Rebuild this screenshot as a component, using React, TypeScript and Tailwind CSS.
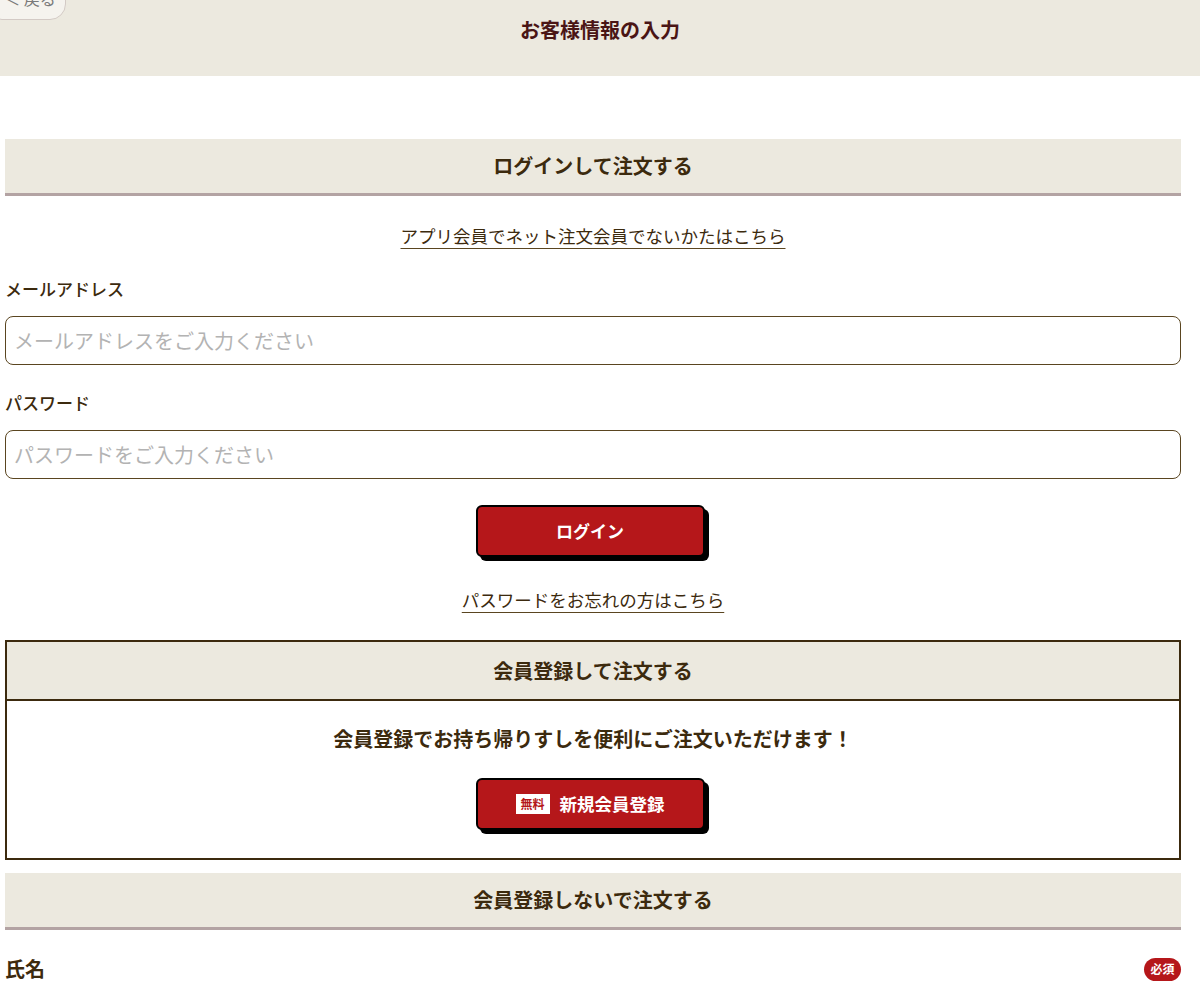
import React from 'react'

const font = { fontFamily: '"Noto Sans CJK JP", "Noto Sans", sans-serif' }

const SectionHead = ({ children }: { children: React.ReactNode }) => (
  <div className="h-[57px] bg-[#ece9df] border-b-[3px] border-[#b3a3a3] flex items-center justify-center">
    <h2 className="text-[20px] font-bold text-[#3c2a0e]">{children}</h2>
  </div>
)

const RedButton = ({ children }: { children: React.ReactNode }) => (
  <button className="w-[229px] h-[52px] rounded-[6px] border-2 border-black bg-[#b5171a] text-white text-[17px] font-bold shadow-[4px_4px_0_#000] flex items-center justify-center gap-[10px]">
    {children}
  </button>
)

const Field = ({ label, placeholder }: { label: string; placeholder: string }) => (
  <div className="flex flex-col">
    <label className="text-[17px] font-medium text-[#3c2a0e] leading-[24px] mb-[15px]">{label}</label>
    <input
      placeholder={placeholder}
      className="h-[49px] w-full rounded-[8px] border-[1.5px] border-[#5a4520] px-[8px] text-[20px] placeholder:text-[#b3b3b3] outline-none"
    />
  </div>
)

export default function App() {
  return (
    <div style={font} className="relative w-[1200px] min-h-[992px] bg-white text-[#3c2a0e] overflow-hidden">
      {/* header */}
      <header className="h-[76px] bg-[#ece9df] flex justify-center pt-[16px]">
        <h1 className="text-[20px] leading-[28px] font-bold text-[#4a1515]">お客様情報の入力</h1>
      </header>
      <button className="absolute -left-[14px] -top-[22px] h-[42px] w-[80px] rounded-[16px] border border-[#d3cac5] bg-[#f5f3ee] text-[#7a7a7a] text-[16px] leading-[20px] flex items-end justify-center pb-[11px] pl-[8px]">
        ＜ 戻る
      </button>

      <main className="ml-[5px] w-[1176px] pt-[63px]">
        <SectionHead>ログインして注文する</SectionHead>

        <p className="text-center mt-[27px] text-[17.5px] leading-[26px] underline underline-offset-[5px] decoration-[#5a4520]">
          アプリ会員でネット注文会員でないかたはこちら
        </p>

        <div className="mt-[28px] flex flex-col gap-[26px]">
          <Field label="メールアドレス" placeholder="メールアドレスをご入力ください" />
          <Field label="パスワード" placeholder="パスワードをご入力ください" />
        </div>

        <div className="flex justify-center mt-[26px] mr-[6px]">
          <RedButton>ログイン</RedButton>
        </div>

        <p className="text-center mt-[30px] text-[17.5px] leading-[26px] underline underline-offset-[5px] decoration-[#5a4520]">
          パスワードをお忘れの方はこちら
        </p>

        {/* register box */}
        <div className="mt-[27px] border-2 border-[#3c2a0e]">
          <div className="h-[59px] bg-[#ece9df] border-b-2 border-[#3c2a0e] flex items-center justify-center">
            <h2 className="text-[20px] font-bold">会員登録して注文する</h2>
          </div>
          <div className="flex flex-col items-center pt-[24px] pb-[28px]">
            <p className="text-[20px] leading-[28px] font-bold">会員登録でお持ち帰りすしを便利にご注文いただけます！</p>
            <div className="mt-[25px] mr-[6px]">
              <RedButton>
                <span className="bg-white text-[#b5171a] text-[12px] font-bold w-[34px] h-[20px] flex items-center justify-center">無料</span>
                <span className="text-[17.5px]">新規会員登録</span>
              </RedButton>
            </div>
          </div>
        </div>

        <div className="mt-[13px]">
          <SectionHead>会員登録しないで注文する</SectionHead>
        </div>

        <div className="mt-[25px] flex items-center justify-between">
          <span className="text-[20px] leading-[28px] font-bold">氏名</span>
          <span className="rounded-full bg-[#b5171a] text-white text-[12px] font-bold w-[37px] h-[23px] flex items-center justify-center">必須</span>
        </div>
      </main>
    </div>
  )
}
